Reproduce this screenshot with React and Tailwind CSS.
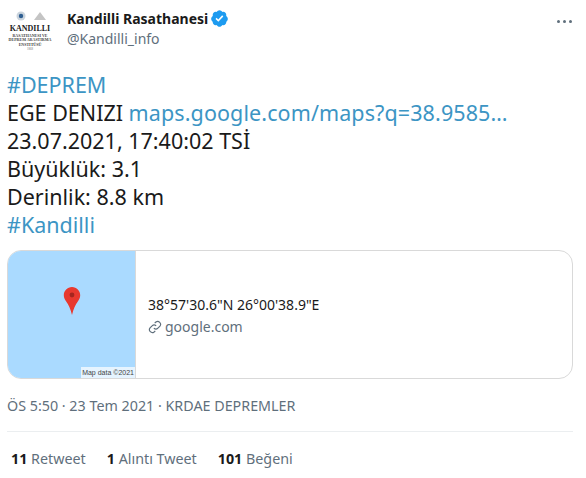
import React from 'react';

const font = { sans: 'font-["Noto_Sans","Open_Sans",sans-serif]' };

function Logo() {
  return (
    <div className="w-[50px] h-[50px] rounded-full bg-white flex flex-col items-center justify-center shrink-0">
      <svg width="36" height="12" viewBox="0 0 36 12" className="mb-[2px]">
        <circle cx="9" cy="6" r="4.5" fill="#c9d3dc" />
        <circle cx="9" cy="6" r="2.2" fill="#2f5f92" />
        <path d="M22 10l6-8 6 8z" fill="#c4c4c4" />
      </svg>
      <div className="text-[8px] leading-[9px] font-bold text-[#222] font-['Liberation_Serif',serif]">KANDILLI</div>
      <div className="text-[4px] leading-[5px] font-bold text-[#444] font-['Liberation_Serif',serif] whitespace-nowrap">RASATHANESI VE</div>
      <div className="text-[4px] leading-[4px] font-bold text-[#444] font-['Liberation_Serif',serif] whitespace-nowrap">DEPREM ARASTIRMA</div>
      <div className="text-[4px] leading-[5px] font-bold text-[#444] font-['Liberation_Serif',serif]">ENSTITÜSÜ</div>
      <div className="text-[3px] leading-[5px] text-[#777] font-['Liberation_Serif',serif]">1868</div>
    </div>
  );
}

function Verified() {
  return (
    <svg viewBox="0 0 24 24" className="w-[19px] h-[19px] ml-[2px] fill-[#1d9bf0]">
      <path d="M22.5 12.5c0-1.58-.875-2.95-2.148-3.6.154-.435.238-.905.238-1.4 0-2.21-1.71-3.998-3.818-3.998-.47 0-.92.084-1.336.25C14.818 2.415 13.51 1.5 12 1.5s-2.816.917-3.437 2.25c-.415-.165-.866-.25-1.336-.25-2.11 0-3.818 1.79-3.818 4 0 .494.083.964.237 1.4-1.272.65-2.147 2.018-2.147 3.6 0 1.495.782 2.798 1.942 3.486-.02.17-.032.34-.032.514 0 2.21 1.708 4 3.818 4 .47 0 .92-.086 1.335-.25.62 1.334 1.926 2.25 3.437 2.25 1.512 0 2.818-.916 3.437-2.25.415.163.865.248 1.336.248 2.11 0 3.818-1.79 3.818-4 0-.174-.012-.344-.033-.513 1.158-.687 1.943-1.99 1.943-3.484z" />
      <path className="fill-white" d="M10.54 16.2l-3.65-3.64 1.38-1.4 2.2 2.2 4.9-5.32 1.45 1.34z" />
    </svg>
  );
}

function Stat({ n, label }) {
  return (
    <span className="text-[14.300px] leading-[20px] text-[#5f6f7c]">
      <b className="font-bold text-[#1a1a1a]">{n}</b> {label}
    </span>
  );
}

export default function App() {
  return (
    <div className={`w-[586px] h-[478px] bg-white overflow-hidden ${font.sans}`}>
      <div className="flex items-center pl-[5px] pr-[14px] pt-[7px] h-[55px]">
        <Logo />
        <div className="ml-[12px] flex flex-col -mt-[5px]">
          <div className="flex items-center text-[14px] leading-[20px] font-bold text-[#1a1a1a]">
            Kandilli Rasathanesi
            <Verified />
          </div>
          <div className="text-[14px] leading-[20px] text-[#5f6f7c]">@Kandilli_info</div>
        </div>
        <div className="ml-auto -mt-[19px] flex gap-[3px]">
          <span className="w-[3px] h-[3px] rounded-full bg-[#5f6f7c]" />
          <span className="w-[3px] h-[3px] rounded-full bg-[#5f6f7c]" />
          <span className="w-[3px] h-[3px] rounded-full bg-[#5f6f7c]" />
        </div>
      </div>

      <div className="px-[7px] mt-[16px] text-[21.500px] leading-[28px] text-[#1a1a1a]">
        <div className="text-[#3c95c4]">#DEPREM</div>
        <div>
          EGE DENIZI <span className="text-[#3c95c4] tracking-[0.1px]">maps.google.com/maps?q=38.9585…</span>
        </div>
        <div>23.07.2021, 17:40:02 TSİ</div>
        <div>Büyüklük: 3.1</div>
        <div>Derinlik: 8.8 km</div>
        <div className="text-[#3c95c4]">#Kandilli</div>
      </div>

      <div className="ml-[7px] mr-[13px] mt-[11px] h-[129px] border border-[#d9d9d9] rounded-[14px] overflow-hidden flex">
        <div className="relative w-[127px] shrink-0 bg-[#aadaff] flex items-center justify-center">
          <svg width="18" height="30" viewBox="0 0 18 30" className="-mt-[28px]">
            <path d="M9 1C4.4 1 .8 4.7.8 9.2c0 2.4 1 4.2 2.4 6.2C5.4 18.6 7.6 22.6 9 29c1.4-6.4 3.6-10.4 5.8-13.6 1.4-2 2.4-3.8 2.4-6.2C17.2 4.7 13.6 1 9 1z" fill="#e8392f" />
            <circle cx="9" cy="9" r="2.4" fill="#a5261f" />
          </svg>
          <span className="absolute right-0 bottom-0 bg-white/70 px-[1px] text-[7px] leading-[11px] text-[#444] font-['Liberation_Sans',sans-serif] whitespace-nowrap">
            Map data ©2021
          </span>
        </div>
        <div className="flex-1 border-l border-[#d9d9d9] pl-[12px] pt-[3px] flex flex-col justify-center">
          <div className="text-[14px] leading-[20px] text-[#1a1a1a]">38°57'30.6"N 26°00'38.9"E</div>
          <div className="flex items-center mt-[2px] text-[14px] leading-[20px] text-[#5f6f7c]">
            <svg viewBox="0 0 24 24" className="w-[14px] h-[14px] mr-[3px] fill-none stroke-[#5f6f7c] stroke-2">
              <path d="M10 14a5 5 0 0 0 7 0l3.5-3.5a5 5 0 0 0-7-7L11.500 5.500" />
              <path d="M14 10a5 5 0 0 0-7 0l-3.500 3.500a5 5 0 0 0 7 7l2-2" />
            </svg>
            google.com
          </div>
        </div>
      </div>

      <div className="px-[7px] mt-[17px] text-[14.300px] leading-[20px] text-[#5f6f7c]">
        ÖS 5:50 · 23 Tem 2021 · KRDAE DEPREMLER
      </div>
      <div className="ml-[7px] mr-[13px] mt-[15px] border-t border-[#ebeef0]" />
      <div className="flex gap-[21px] pl-[11px] mt-[17px]">
        <Stat n="11" label="Retweet" />
        <Stat n="1" label="Alıntı Tweet" />
        <Stat n="101" label="Beğeni" />
      </div>
    </div>
  );
}
